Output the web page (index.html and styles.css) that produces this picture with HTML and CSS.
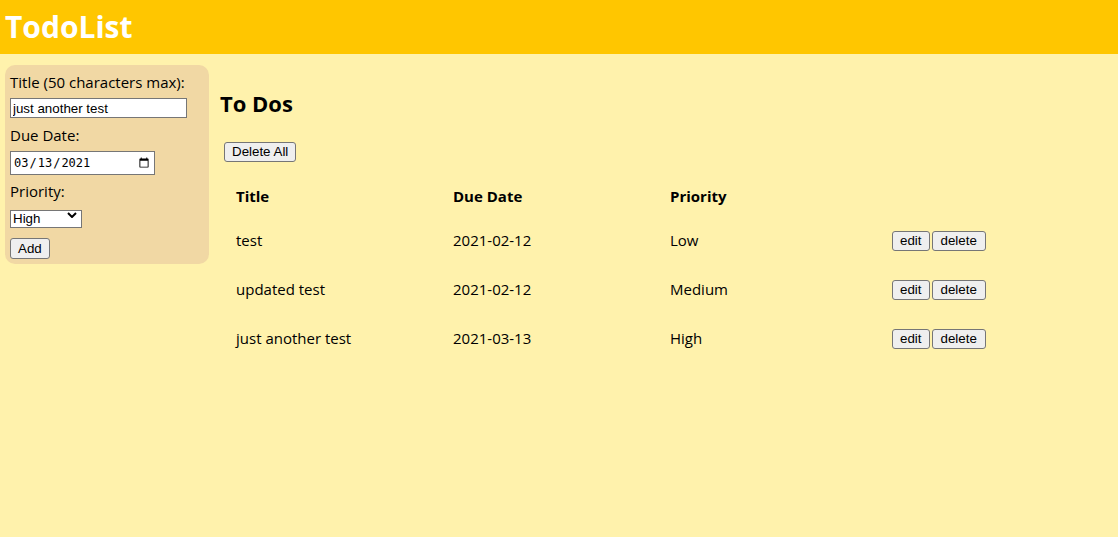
FILE: index.html
```html
<!DOCTYPE html>
<html>
<head>
<meta charset="utf-8">
<link rel="stylesheet" href="styles.css">
</head>
<body>
<header class="topbar"><h1 class="brand">TodoList</h1></header>
<div class="layout">
  <form class="sidebar">
    <label class="lbl">Title (50 characters max):</label>
    <input class="text-in" type="text" value="just another test">
    <label class="lbl">Due Date:</label>
    <input class="date-in" type="date" value="2021-03-13">
    <label class="lbl">Priority:</label>
    <div class="select-wrap">
      <select class="sel"><option>Low</option><option>Medium</option><option selected>High</option></select>
      <svg class="chev" width="10" height="6" viewBox="0 0 10 6"><path d="M1 1 L5 5 L9 1" fill="none" stroke="#000" stroke-width="2"/></svg>
    </div>
    <button class="btn add" type="button">Add</button>
  </form>
  <main class="main">
    <h2 class="title">To Dos</h2>
    <button class="btn delall" type="button">Delete All</button>
    <table class="todos">
      <thead>
        <tr><th>Title</th><th>Due Date</th><th>Priority</th><th></th></tr>
      </thead>
      <tbody>
        <tr><td>test</td><td>2021-02-12</td><td>Low</td><td class="acts"><button class="btn">edit</button><button class="btn">delete</button></td></tr>
        <tr><td>updated test</td><td>2021-02-12</td><td>Medium</td><td class="acts"><button class="btn">edit</button><button class="btn">delete</button></td></tr>
        <tr><td>just another test</td><td>2021-03-13</td><td>High</td><td class="acts"><button class="btn">edit</button><button class="btn">delete</button></td></tr>
      </tbody>
    </table>
  </main>
</div>
</body>
</html>
```
FILE: styles.css
```css
html, body {
  margin: 0;
  padding: 0;
}
body {
  background: #fff2ac;
  font-family: "Open Sans", "Noto Sans", sans-serif;
  color: #000;
  height: 537px;
}
.topbar {
  background: #ffc600;
  height: 54px;
  display: flex;
  align-items: center;
  padding-left: 5px;
}
.brand {
  margin: 0;
  color: #fff;
  font-size: 30px;
  font-weight: 700;
  line-height: 1;
}
.layout {
  display: flex;
  align-items: flex-start;
  gap: 11px;
  padding-left: 5px;
}
.sidebar {
  margin-top: 11px;
  width: 194px;
  background: #f1d8a4;
  border-radius: 10px;
  padding: 6px 5px 5px 5px;
  display: flex;
  flex-direction: column;
  align-items: flex-start;
}
.lbl {
  display: block;
  font-size: 15px;
  line-height: 22px;
  margin-bottom: 5px;
}
.text-in {
  box-sizing: border-box;
  width: 177px;
  height: 20px;
  margin: 0 0 6px 0;
  padding: 1px 2px;
  border: 1px solid #767676;
  font-family: "Liberation Sans", Arial, sans-serif;
  font-size: 13.33px;
  background: #fff;
}
.date-in {
  box-sizing: border-box;
  width: 145px;
  height: 24px;
  margin: 0 0 5px 0;
  padding: 1px 2px;
  border: 1px solid #767676;
  font-family: "DejaVu Sans Mono", monospace;
  font-size: 12px;
  background: #fff;
}
.select-wrap {
  position: relative;
  width: 72px;
  height: 18px;
  margin-top: -1px;
  margin-bottom: 14px;
}
.sel {
  appearance: none;
  -webkit-appearance: none;
  box-sizing: border-box;
  width: 72px;
  height: 18px;
  margin: 0;
  padding: 0 2px;
  border: 1px solid #767676;
  border-radius: 0;
  background: #fff;
  font-family: "Liberation Sans", Arial, sans-serif;
  font-size: 13.33px;
  color: #000;
}
.chev {
  position: absolute;
  right: 5px;
  top: 6px;
  pointer-events: none;
}
.btn {
  font-family: "Liberation Sans", Arial, sans-serif;
  font-size: 13.33px;
  background: #efefef;
  border: 1px solid #767676;
  border-radius: 3px;
  padding: 0 7px;
  height: 20px;
  line-height: 18px;
  color: #000;
  margin: 0;
}
.add {
  height: 21px;
}
.main {
  flex: 1;
  display: flex;
  flex-direction: column;
  align-items: flex-start;
}
.title {
  margin: 37px 0 0 0;
  font-size: 22px;
  line-height: 24px;
  font-weight: 700;
}
.delall {
  margin: 27px 0 0 4px;
}
.todos {
  margin: 14px 0 0 4px;
  border-collapse: collapse;
  width: 868px;
  table-layout: fixed;
  font-size: 15px;
}
.todos th {
  text-align: left;
  font-weight: 700;
  height: 39px;
  padding: 0 12px;
}
.todos td {
  height: 49px;
  padding: 0 12px;
}
.todos td.acts {
  padding-left: 17px;
}
.acts .btn {
  margin-right: 2px;
}
.acts .btn:last-child {
  padding: 0 8px;
}
```
